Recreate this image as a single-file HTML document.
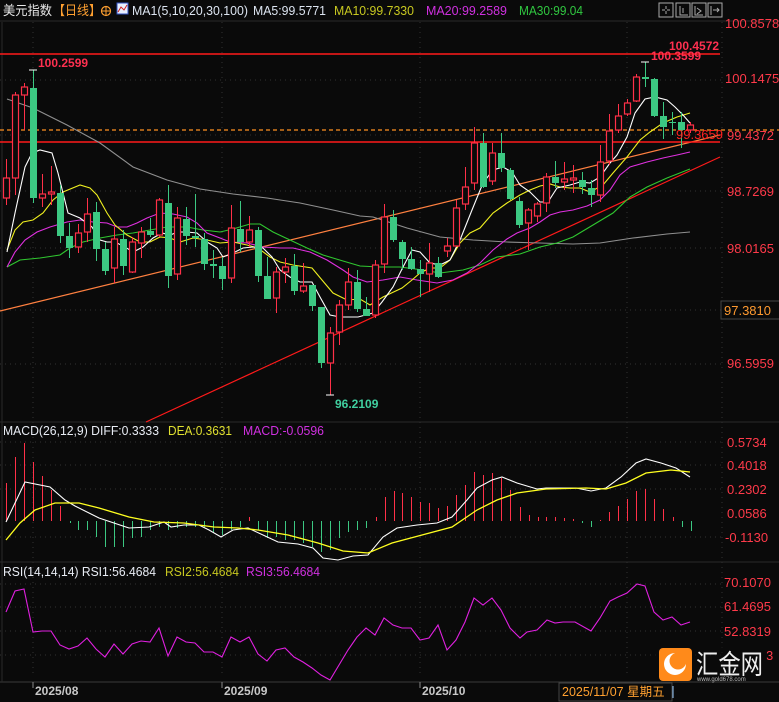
<!DOCTYPE html><html><head><meta charset="utf-8"><style>
body{margin:0;background:#0a0a0a;width:779px;height:702px;overflow:hidden;font-family:"Liberation Sans","Noto Sans CJK SC",sans-serif}
svg{position:absolute;left:0;top:0}
</style></head><body>
<svg id="s" width="779" height="702" viewBox="0 0 779 702" font-family="Liberation Sans, Noto Sans CJK SC, sans-serif">
<rect width="779" height="702" fill="#0a0a0a"/>
<g stroke="#333" stroke-dasharray="1,4" stroke-width="1">
<line x1="0" y1="80" x2="722" y2="80"/><line x1="0" y1="135" x2="722" y2="135"/><line x1="0" y1="191" x2="722" y2="191"/><line x1="0" y1="248" x2="722" y2="248"/><line x1="0" y1="310" x2="722" y2="310"/><line x1="0" y1="364" x2="722" y2="364"/>
<line x1="0" y1="442" x2="722" y2="442"/><line x1="0" y1="465" x2="722" y2="465"/><line x1="0" y1="489" x2="722" y2="489"/><line x1="0" y1="537" x2="722" y2="537"/>
<line x1="0" y1="584" x2="722" y2="584"/><line x1="0" y1="607" x2="722" y2="607"/><line x1="0" y1="631" x2="722" y2="631"/><line x1="0" y1="655" x2="722" y2="655"/>
<line x1="33" y1="22" x2="33" y2="676"/><line x1="222" y1="22" x2="222" y2="676"/><line x1="420" y1="22" x2="420" y2="676"/><line x1="627" y1="22" x2="627" y2="676"/>
<line x1="722" y1="22" x2="722" y2="676"/>
</g>
<line x1="0" y1="21" x2="779" y2="21" stroke="#2a2a2a"/>
<line x1="0" y1="422" x2="779" y2="422" stroke="#2a2a2a"/>
<line x1="0" y1="562" x2="779" y2="562" stroke="#2a2a2a"/>
<line x1="0" y1="682" x2="779" y2="682" stroke="#3a3a3a"/>
<line x1="2" y1="22" x2="2" y2="682" stroke="#2a2a2a"/>
<line x1="0" y1="311" x2="720" y2="135" stroke="#ff8040" stroke-width="1.2"/>
<line x1="146" y1="422" x2="720" y2="157" stroke="#ff1a1a" stroke-width="1.2"/>
<line x1="0" y1="54" x2="720" y2="54" stroke="#ff1a1a" stroke-width="1.5"/>
<line x1="0" y1="142" x2="720" y2="142" stroke="#ff1a1a" stroke-width="1.5"/>
<line x1="0" y1="130" x2="779" y2="130" stroke="#ff9020" stroke-dasharray="4,3" stroke-width="1.2"/>
<g id="ma" fill="none" stroke-width="1.1"></g>
<g id="cd"></g>
<g id="mh"></g>
<polyline fill="none" stroke="#ffffff" stroke-width="1.1" points="6,522 25,482 50,487 65,500 75,506 99,518 129,528 149,527 164,522 171,527 184,525 199,525 209,530 221,537 233,530 248,528 263,535 278,542 298,544 313,548 323,558 338,560 353,556 368,555 383,537 397,528 417,525 437,523 452,517 467,500 477,488 492,480 502,477 517,483 537,489 546,488 576,488 591,491 606,488 621,477 636,463 646,459 661,463 676,468 690,477"/>
<polyline fill="none" stroke="#ffff20" stroke-width="1.3" points="6,540 20,523 35,510 55,503 79,503 99,508 129,517 154,522 184,523 214,527 238,528 258,530 288,535 318,543 343,551 368,553 392,543 422,535 452,527 477,510 497,500 517,493 546,489 586,488 606,489 626,483 646,473 671,470 690,472"/>
<polyline fill="none" stroke="#e020e0" stroke-width="1.1" points="6,612 15,591 24,589 33,632 42,631 51,631 60,645 69,649 78,646 87,638 96,649 105,657 114,644 123,654 132,644 141,641 150,642 159,628 168,656 177,637 186,642 195,643 204,652 213,652 222,657 231,637 240,642 249,637 258,654 267,661 276,650 285,648 294,657 303,662 312,668 321,675 330,680 339,665 348,650 357,637 366,628 375,635 384,618 393,625 402,628 411,628 420,640 429,638 438,625 447,650 456,640 465,622 474,598 483,605 492,598 501,610 510,628 520,638 527,632 537,630 547,620 555,623 563,622 575,622 591,631 600,618 610,601 618,597 627,593 637,584 645,586 654,612 663,620 672,617 681,625 690,622"/>
<g stroke="#fff" stroke-width="1"><line x1="29" y1="70" x2="37" y2="70"/><line x1="641" y1="62" x2="649" y2="62"/><line x1="326" y1="395" x2="334" y2="395"/></g>
<g font-weight="bold" font-size="12">
<text x="38" y="67" fill="#ff3050">100.2599</text>
<text x="335" y="408" fill="#40d0a0">96.2109</text>
<text x="651" y="60" fill="#ff3050">100.3599</text>
<text x="669" y="50" fill="#ff3050">100.4572</text>
</g>
<text x="676" y="139" fill="#ff2020" font-size="13">99.3659</text>
<g font-size="13" fill="#ff3a4a">
<text x="725" y="28">100.8578</text><text x="725" y="83">100.1475</text><text x="727" y="140">99.4372</text><text x="727" y="196">98.7269</text><text x="727" y="253">98.0165</text><text x="727" y="368">96.5959</text>
<text x="727" y="447">0.5734</text><text x="727" y="470">0.4018</text><text x="727" y="494">0.2302</text><text x="727" y="518">0.0586</text><text x="725" y="542">-0.1130</text>
<text x="724" y="587">70.1070</text><text x="724" y="611">61.4695</text><text x="724" y="636">52.8319</text><text x="766" y="660">3</text>
</g>
<rect x="721" y="301" width="60" height="18" fill="#0a0a0a" stroke="#444"/>
<text x="724" y="315" fill="#ff9a30" font-size="13">97.3810</text>
<g font-size="13">
<text x="3" y="15" fill="#e8e8e8" textLength="49" lengthAdjust="spacingAndGlyphs">美元指数</text>
<text x="53" y="15" fill="#ffa030" textLength="48" lengthAdjust="spacingAndGlyphs">【日线】</text>
<circle cx="106" cy="11" r="4.5" fill="none" stroke="#ffa030" stroke-width="1.2"/><line x1="101" y1="11" x2="111" y2="11" stroke="#ffa030"/><line x1="106" y1="6" x2="106" y2="16" stroke="#ffa030"/>
<rect x="117" y="3" width="11" height="11" fill="#e8f0ff" stroke="#3050c0"/><polyline points="118,12 121,7 124,10 127,5" fill="none" stroke="#d02020"/>
<text x="132" y="15" fill="#dce4f0" textLength="116" lengthAdjust="spacingAndGlyphs">MA1(5,10,20,30,100)</text>
<text x="253" y="15" fill="#dce4f0" textLength="73" lengthAdjust="spacingAndGlyphs">MA5:99.5771</text>
<text x="334" y="15" fill="#c8c820" textLength="80" lengthAdjust="spacingAndGlyphs">MA10:99.7330</text>
<text x="426" y="15" fill="#d030e0" textLength="81" lengthAdjust="spacingAndGlyphs">MA20:99.2589</text>
<text x="519" y="15" fill="#30c840" textLength="64" lengthAdjust="spacingAndGlyphs">MA30:99.04</text>
<text x="3" y="435" fill="#e8ecf4" textLength="156" lengthAdjust="spacingAndGlyphs">MACD(26,12,9) DIFF:0.3333</text>
<text x="168" y="435" fill="#e0e030" textLength="64" lengthAdjust="spacingAndGlyphs">DEA:0.3631</text>
<text x="243" y="435" fill="#d030e0" textLength="81" lengthAdjust="spacingAndGlyphs">MACD:-0.0596</text>
<text x="3" y="576" fill="#e8ecf4" textLength="153" lengthAdjust="spacingAndGlyphs">RSI(14,14,14) RSI1:56.4684</text>
<text x="165" y="576" fill="#c8c820" textLength="74" lengthAdjust="spacingAndGlyphs">RSI2:56.4684</text>
<text x="246" y="576" fill="#d030e0" textLength="74" lengthAdjust="spacingAndGlyphs">RSI3:56.4684</text>
</g>
<g fill="none" stroke="#aaa" stroke-width="1">
<rect x="659" y="3" width="14" height="14"/><rect x="676" y="3" width="14" height="14"/><rect x="692" y="3" width="14" height="14"/><rect x="708" y="3" width="14" height="14"/>
<path d="M666 6v3M666 11v3M662 10h3M667 10h3M680 6v9h8M683 8v5M695 6v9h8M697 8l4 3-4 3M711 6v9M713 10h6M717 8l2 2-2 2"/>
</g>
<g font-size="12" font-weight="bold" fill="#c8c8c8">
<text x="35" y="695">2025/08</text><text x="224" y="695">2025/09</text><text x="422" y="695">2025/10</text>
</g>
<g stroke="#888"><line x1="33" y1="682" x2="33" y2="688"/><line x1="222" y1="682" x2="222" y2="688"/><line x1="420" y1="682" x2="420" y2="688"/></g>
<rect x="559" y="683" width="113" height="18" fill="#0a0a0a" stroke="#444"/>
<text x="562" y="696" fill="#ffa030" font-size="12.5">2025/11/07 星期五</text>
<line x1="673" y1="686" x2="673" y2="698" stroke="#9cf"/>
<rect x="655" y="645" width="112" height="36" fill="#0a0a0a" opacity="0.6"/>
<rect x="659" y="648" width="33" height="33" rx="4" fill="#ff8a1a"/>
<circle cx="675" cy="664" r="11" fill="#fff"/><circle cx="678" cy="661" r="8.5" fill="#ff8a1a"/>
<text x="696" y="674" fill="#eeeeee" font-size="27" textLength="67" lengthAdjust="spacingAndGlyphs">汇金网</text>
<text x="697" y="681" fill="#bbb" font-size="6">www.gold678.com</text>
</svg>
<script>
var C=[[6,'r',178,198,159,205],[15,'r',95,178,92,195],[24,'r',87,95,83,130],[33,'g',88,198,70,203],[42,'r',194,198,174,207],[51,'r',192,194,166,205],[60,'g',193,236,185,243],[69,'g',236,248,223,258],[78,'r',233,247,224,253],[87,'r',214,232,198,242],[96,'g',212,249,202,261],[105,'g',249,271,242,275],[114,'r',239,268,227,283],[123,'g',239,266,230,275],[132,'r',242,272,237,273],[141,'r',232,243,227,258],[150,'g',231,235,218,237],[159,'r',200,235,198,237],[168,'g',203,276,185,288],[177,'r',218,274,207,280],[186,'g',219,236,207,245],[195,'g',236,238,194,247],[204,'g',239,264,233,270],[213,'g',264,266,250,278],[222,'g',266,279,257,290],[231,'r',228,278,205,283],[240,'g',229,242,201,252],[249,'r',230,242,216,247],[258,'g',230,276,227,282],[267,'g',276,299,257,299],[276,'r',272,298,267,313],[285,'r',267,272,258,283],[294,'g',266,291,254,295],[303,'r',286,291,263,293],[312,'g',285,306,285,311],[321,'g',307,363,307,368],[330,'r',333,363,327,395],[339,'r',305,332,300,345],[348,'r',282,305,268,310],[357,'g',282,309,270,312],[366,'g',309,316,297,316],[375,'r',265,315,260,318],[384,'r',217,264,204,273],[393,'g',217,240,210,242],[402,'g',242,259,240,270],[411,'g',259,269,247,270],[420,'g',269,274,260,297],[429,'r',263,274,243,292],[438,'g',263,277,257,278],[447,'r',246,251,238,257],[456,'r',208,246,200,247],[465,'r',187,204,167,210],[474,'r',143,183,127,190],[483,'g',143,187,133,188],[492,'r',153,181,143,185],[501,'g',153,168,133,172],[510,'g',170,199,168,200],[519,'g',201,225,197,228],[528,'r',210,223,208,250],[537,'r',204,216,202,222],[546,'r',177,203,173,212],[555,'g',177,183,161,188],[564,'r',179,182,162,190],[573,'r',178,180,165,193],[582,'g',180,187,172,194],[591,'g',188,195,180,207],[600,'r',162,195,145,202],[609,'r',131,161,114,165],[618,'r',116,130,104,133],[627,'r',103,114,99,116],[636,'r',77,101,74,102],[645,'g',77,79,62,87],[654,'g',79,116,78,117],[663,'g',116,127,102,139],[672,'g',122,123,112,135],[681,'g',122,130,112,148],[690,'r',125,130,122,133]];
var h='';C.forEach(function(c){var x=c[0],col=c[1]=='r'?'#ff3048':'#3cc882';var hh=Math.max(c[3]-c[2],1);
h+='<line x1="'+(x+.5)+'" y1="'+c[4]+'" x2="'+(x+.5)+'" y2="'+c[5]+'" stroke="'+col+'"/>';
if(c[1]=='r')h+='<rect x="'+(x-2.5)+'" y="'+c[2]+'" width="6" height="'+hh+'" fill="#0a0a0a" stroke="'+col+'" stroke-width="1.2"/>';
else h+='<rect x="'+(x-3)+'" y="'+c[2]+'" width="7" height="'+hh+'" fill="'+col+'"/>';});
document.getElementById('cd').innerHTML=h;
var M=[['#909090','7,99 33,108 67,125 100,143 133,167 167,180 200,189 233,194 267,198 300,203 333,210 360,216 373,217 407,228 440,237 473,240 507,242 540,243 573,244 600,243 633,238 667,234 690,232'],
['#30c830','7,267 20,260 40,258 60,255 70,248 83,242 100,238 117,235 133,233 150,230 167,227 187,227 203,230 220,232 233,229 250,224 260,224 273,232 290,240 307,248 323,255 343,261 360,266 380,267 400,267 423,270 440,273 463,270 480,265 497,257 520,254 540,247 557,243 573,237 593,225 613,213 630,197 647,187 667,178 690,169'],
['#e030e0','7,267 15,252 25,240 37,232 50,227 67,222 80,220 93,222 107,223 117,227 127,227 137,223 147,218 160,213 173,214 187,217 197,223 207,233 220,238 230,242 247,243 263,247 280,248 293,248 310,252 327,260 343,270 353,277 367,282 383,280 400,277 417,280 437,283 453,280 467,273 480,263 493,250 507,239 517,233 530,228 540,222 550,215 560,212 573,210 587,206 600,200 610,190 620,175 630,167 647,162 663,158 677,155 690,152'],
['#f0f020','7,250 15,230 23,222 33,220 43,213 53,200 63,192 80,185 90,188 97,195 107,213 115,225 127,235 140,242 150,242 160,237 170,238 180,242 193,238 207,240 220,243 233,242 247,245 258,248 270,257 280,262 293,265 312,268 322,280 333,293 347,300 360,299 370,305 383,297 402,288 412,280 420,273 430,268 440,268 450,260 460,243 470,233 480,228 493,213 507,203 520,195 530,190 540,186 550,184 560,187 570,188 580,188 590,192 603,185 613,173 627,157 640,140 650,132 663,123 677,117 690,113'],
['#ffffff','7,252 15,213 25,167 32,153 40,150 52,153 58,173 68,213 80,218 92,227 100,240 107,242 115,242 125,247 133,252 143,247 153,238 162,233 170,235 178,232 187,232 197,233 207,242 217,248 223,257 233,253 243,248 253,247 263,248 272,257 280,270 290,277 300,282 312,282 320,297 330,315 340,317 358,317 373,313 382,302 393,287 403,267 412,250 420,252 430,263 440,265 450,260 460,240 472,210 483,183 493,170 503,167 512,172 520,185 530,192 540,202 548,202 557,188 570,185 580,182 590,183 600,177 610,163 617,155 627,137 635,113 645,99 655,97 667,100 675,107 683,115 690,123']];
var m='';M.forEach(function(a){m+='<polyline points="'+a[1]+'" stroke="'+a[0]+'"/>'});document.getElementById('ma').innerHTML=m;
var B=[[6,483],[15,457],[24,443],[33,462],[42,476],[51,490],[60,506],[70,523],[78,530],[87,530],[96,537],[105,547],[114,547],[123,547],[132,538],[141,537],[150,530],[159,527],[168,530],[177,528],[186,527],[195,527],[204,527],[213,532],[222,535],[231,530],[240,527],[249,517],[258,530],[267,538],[276,537],[285,540],[294,540],[303,543],[312,547],[321,552],[330,550],[339,538],[348,532],[357,530],[366,528],[376,517],[385,497],[394,491],[402,493],[411,497],[420,502],[429,503],[438,508],[447,506],[456,495],[465,485],[474,472],[483,475],[492,473],[501,478],[510,490],[520,507],[529,515],[538,517],[546,517],[555,517],[564,518],[573,519],[582,523],[591,527],[600,520],[609,512],[618,506],[627,499],[636,491],[645,489],[654,499],[663,509],[673,517],[682,527],[691,531]];
var z=521,b='';B.forEach(function(p){var up=p[1]<z;b+='<line x1="'+(p[0]+.5)+'" y1="'+z+'" x2="'+(p[0]+.5)+'" y2="'+p[1]+'" stroke="'+(up?'#ff3048':'#3cc882')+'"/>'});document.getElementById('mh').innerHTML=b;
</script>
</body></html>
